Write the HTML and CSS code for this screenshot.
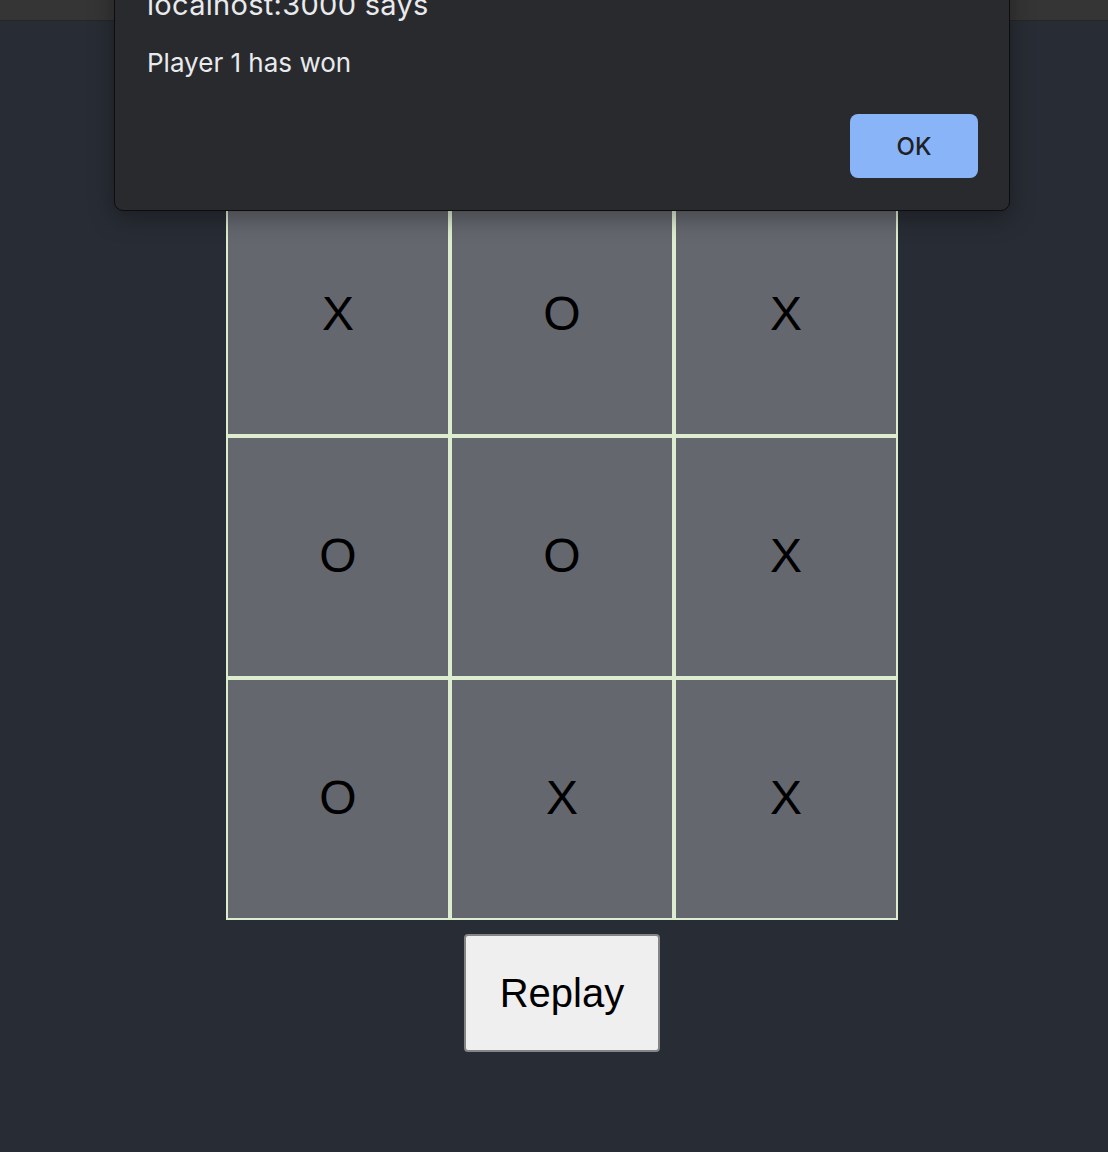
FILE: index.html
```html
<!DOCTYPE html>
<html>
<head>
<meta charset="utf-8">
<title>Tic Tac Toe</title>
<link rel="stylesheet" href="styles.css">
</head>
<body>
<div class="topbar"></div>
<main class="app">
  <div class="board">
    <div class="cell">X</div>
    <div class="cell">O</div>
    <div class="cell">X</div>
    <div class="cell">O</div>
    <div class="cell">O</div>
    <div class="cell">X</div>
    <div class="cell">O</div>
    <div class="cell">X</div>
    <div class="cell">X</div>
  </div>
  <button class="replay">Replay</button>
</main>
<div class="dialog">
  <div class="dialog-title">localhost:3000 says</div>
  <div class="dialog-msg">Player 1 has won</div>
  <div class="dialog-actions">
    <button class="ok">OK</button>
  </div>
</div>
</body>
</html>
```
FILE: styles.css
```css
html, body {
  margin: 0;
  padding: 0;
  background: #282c34;
  height: 100%;
}
body {
  font-family: "Liberation Sans", Arial, sans-serif;
  position: relative;
  overflow: hidden;
}
.topbar {
  height: 20px;
  background: #353535;
  border-bottom: 1px solid #262626;
}
.app {
  display: flex;
  flex-direction: column;
  align-items: center;
  padding-left: 16px;
  padding-top: 173px;
}
.board {
  display: grid;
  grid-template-columns: repeat(3, 224px);
  grid-template-rows: repeat(3, 242px);
}
.cell {
  box-sizing: border-box;
  border: 2px solid #deedcf;
  background: #65676f;
  display: flex;
  align-items: center;
  justify-content: center;
  font-size: 48px;
  color: #000;
  padding-bottom: 4px;
}
.replay {
  margin-top: 14px;
  width: 196px;
  height: 118px;
  box-sizing: border-box;
  background: #efefef;
  border: 2px solid #858585;
  border-radius: 4px;
  font-family: "Liberation Sans", Arial, sans-serif;
  font-size: 40px;
  color: #000;
  padding: 0;
}
.dialog {
  position: absolute;
  left: 114px;
  top: -40px;
  width: 896px;
  height: 251px;
  box-sizing: border-box;
  background: #292a2d;
  border: 1px solid #0d0d0e;
  border-radius: 0 0 9px 9px;
  box-shadow: 0 6px 24px rgba(0, 0, 0, 0.35);
  font-family: Inter, "Noto Sans", sans-serif;
  color: #e8eaed;
  padding: 0 31px 0 32px;
}
.dialog-title {
  font-size: 29px;
  line-height: 34px;
  margin-top: 27px;
  letter-spacing: 0.3px;
}
.dialog-msg {
  font-size: 26px;
  line-height: 32px;
  margin-top: 25px;
}
.dialog-actions {
  display: flex;
  justify-content: flex-end;
  margin-top: 35px;
}
.ok {
  width: 128px;
  height: 64px;
  border: none;
  border-radius: 8px;
  background: #8ab4f8;
  color: #202124;
  font-family: Inter, "Noto Sans", sans-serif;
  font-size: 24px;
  font-weight: 500;
  padding: 0;
}
```
